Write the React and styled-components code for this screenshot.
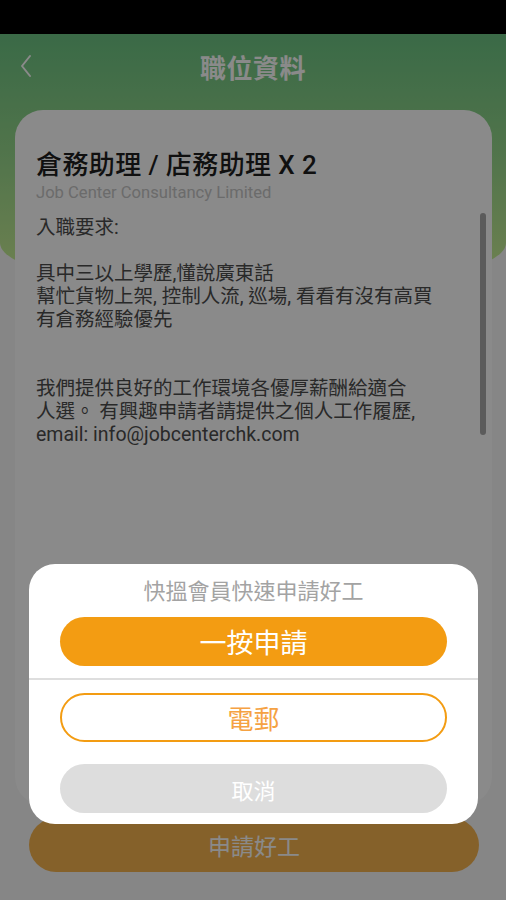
import React from 'react';
import styled, { createGlobalStyle } from 'styled-components';

const GlobalStyle = createGlobalStyle`
  html, body {
    margin: 0;
    padding: 0;
  }
  body {
    background: #f7f7f7;
    font-family: Roboto, "Noto Sans CJK TC", "Noto Sans", sans-serif;
  }
  #root {
    height: 900px;
  }
`;

const Screen = styled.div`
  position: relative;
  width: 506px;
  height: 900px;
  overflow: hidden;
  background: #f7f7f7;
`;

const StatusBar = styled.div`
  height: 34px;
  background: #000;
`;

const Header = styled.div`
  height: 259px;
  background: linear-gradient(180deg, #6cc483 0%, #9ad98c 50%, #d2f296 100%);
  border-bottom-left-radius: 50% 50px;
  border-bottom-right-radius: 50% 50px;
`;

const NavRow = styled.div`
  position: relative;
  height: 64px;
  display: flex;
  align-items: center;
  justify-content: center;
`;

const BackButton = styled.button`
  position: absolute;
  left: 14px;
  top: 18px;
  width: 24px;
  height: 28px;
  padding: 0;
  border: 0;
  background: none;
  display: flex;
  align-items: center;
  justify-content: center;
`;

const NavTitle = styled.h1`
  margin: 0;
  font-size: 26px;
  font-weight: 700;
  color: #fff;
  letter-spacing: 0.5px;
`;

const Card = styled.div`
  position: relative;
  height: 695px;
  margin: -183px 14px 0 15px;
  padding: 40px 21px;
  box-sizing: border-box;
  background: #fff;
  border-radius: 28px;
`;

const JobTitle = styled.h2`
  margin: 0;
  font-size: 26px;
  line-height: 30px;
  font-weight: 500;
  color: #1e1e1e;
  letter-spacing: 0.4px;
`;

const Company = styled.div`
  margin-top: 4px;
  font-size: 16.6px;
  line-height: 18px;
  color: #c6c6c6;
`;

const Description = styled.div`
  margin-top: 14px;
  font-size: 19.5px;
  line-height: 23px;
  color: #4c4c4c;
  white-space: pre;
`;

const ScrollThumb = styled.div`
  position: absolute;
  right: 6px;
  top: 103px;
  width: 6px;
  height: 222px;
  border-radius: 3px;
  background: #a9a9a9;
`;

const ApplyButton = styled.button`
  display: flex;
  align-items: center;
  justify-content: center;
  width: 450px;
  height: 54px;
  margin: 13px 28px 0 29px;
  border: 0;
  border-radius: 27px;
  background: #f6b44f;
  color: #fff;
  font-family: inherit;
  font-size: 23px;
`;

const Overlay = styled.div`
  position: absolute;
  inset: 0;
  background: rgba(0, 0, 0, 0.46);
  display: flex;
  flex-direction: column;
  justify-content: flex-end;
  padding-bottom: 76px;
  box-sizing: border-box;
`;

const Sheet = styled.div`
  margin: 0 28px 0 29px;
  padding: 16px 0 11px;
  background: #fff;
  border-radius: 26px;
  display: flex;
  flex-direction: column;
`;

const SheetTitle = styled.div`
  text-align: center;
  font-size: 22px;
  line-height: 24px;
  color: #a3a3a3;
  margin-bottom: 13px;
`;

const Divider = styled.div`
  height: 2px;
  background: #dedede;
  margin: 12px 0 13px;
`;

const SheetButton = styled.button`
  display: flex;
  align-items: center;
  justify-content: center;
  height: 49px;
  margin: ${p => (p.$gap ? '22px 31px 0' : '0 31px')};
  box-sizing: border-box;
  border-radius: 25px;
  font-family: inherit;
  font-size: ${p => (p.$variant === 'cancel' ? '22px' : p.$variant === 'solid' ? '27px' : '26px')};
  padding: 0;
  border: ${p => (p.$variant === 'outline' ? '2px solid #f39c12' : '0')};
  background: ${p =>
    p.$variant === 'solid' ? '#f39c12' : p.$variant === 'cancel' ? '#dddddd' : '#fff'};
  color: ${p => (p.$variant === 'outline' ? '#f5a243' : '#fff')};
`;

const description = `入職要求:

具中三以上學歷,懂說廣東話
幫忙貨物上架, 控制人流, 巡場, 看看有沒有高買
有倉務經驗優先


我們提供良好的工作環境各優厚薪酬給適合
人選。 有興趣申請者請提供之個人工作履歷,
email: info@jobcenterchk.com`;

function ChevronLeft() {
  return (
    <svg width="14" height="24" viewBox="0 0 14 24" fill="none">
      <polyline points="11,2 3,12 11,22" stroke="#fff" strokeWidth="2" strokeLinecap="round" strokeLinejoin="round" />
    </svg>
  );
}

export default function App() {
  return (
    <Screen>
      <GlobalStyle />
      <StatusBar />
      <Header>
        <NavRow>
          <BackButton>
            <ChevronLeft />
          </BackButton>
          <NavTitle>職位資料</NavTitle>
        </NavRow>
      </Header>

      <Card>
        <JobTitle>倉務助理 / 店務助理 X 2</JobTitle>
        <Company>Job Center Consultancy Limited</Company>
        <Description>{description}</Description>
        <ScrollThumb />
      </Card>

      <ApplyButton>申請好工</ApplyButton>

      <Overlay>
        <Sheet>
          <SheetTitle>快搵會員快速申請好工</SheetTitle>
          <SheetButton $variant="solid">一按申請</SheetButton>
          <Divider />
          <SheetButton $variant="outline">電郵</SheetButton>
          <SheetButton $variant="cancel" $gap>取消</SheetButton>
        </Sheet>
      </Overlay>
    </Screen>
  );
}
